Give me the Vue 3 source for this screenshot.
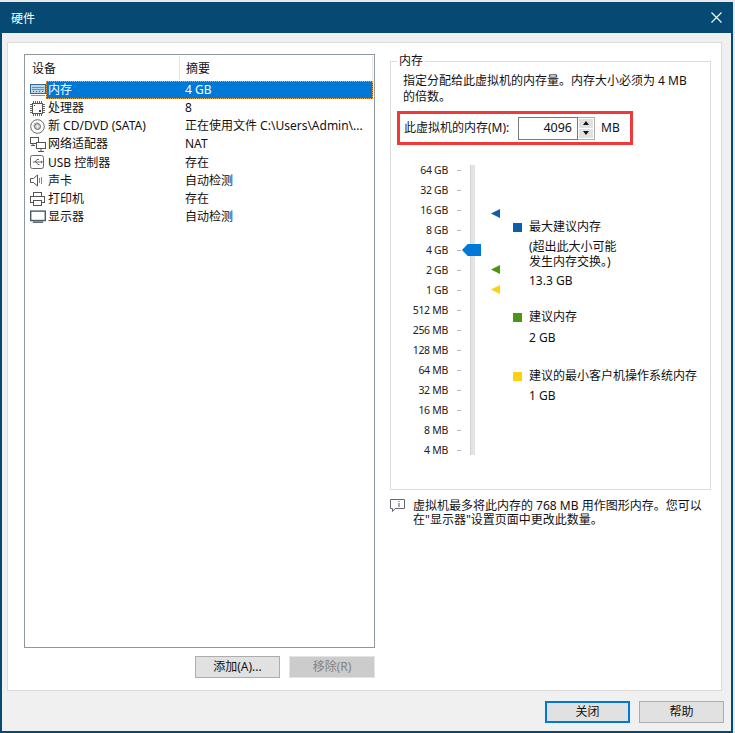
<script setup>
const devices = [
  { icon: 'mem', name: '内存', summary: '4 GB', selected: true },
  { icon: 'cpu', name: '处理器', summary: '8' },
  { icon: 'cd', name: '新 CD/DVD (SATA)', summary: '正在使用文件 C:\\Users\\Admin\\...' },
  { icon: 'net', name: '网络适配器', summary: 'NAT' },
  { icon: 'usb', name: 'USB 控制器', summary: '存在' },
  { icon: 'snd', name: '声卡', summary: '自动检测' },
  { icon: 'prn', name: '打印机', summary: '存在' },
  { icon: 'mon', name: '显示器', summary: '自动检测' }
]
const scale = ['64 GB','32 GB','16 GB','8 GB','4 GB','2 GB','1 GB','512 MB','256 MB','128 MB','64 MB','32 MB','16 MB','8 MB','4 MB']
</script>

<template>
  <div class="window">
    <div class="titlebar">
      <span class="title">硬件</span>
      <svg class="close" width="11" height="11" viewBox="0 0 11 11"><path d="M.5.5l10 10M10.500.5l-10 10" stroke="#fff" stroke-width="1.100" fill="none"/></svg>
    </div>
    <div class="body">
      <div class="panel">
        <div class="left">
          <div class="list">
            <div class="list-head">
              <div class="col1">设备</div>
              <div class="col2">摘要</div>
            </div>
            <div v-for="d in devices" :key="d.icon" class="row">
              <span class="ico">
                <svg v-if="d.icon==='mem'" width="16" height="12" viewBox="0 0 16 12"><rect x=".5" y=".5" width="15" height="9" fill="#bcd6ea" stroke="#2f6a96"/><path d="M2 3.500h12M2 5.500h12" stroke="#5f93bb"/><path d="M3 7.500h1M6 7.500h1M9 7.500h1M12 7.500h1" stroke="#2f6a96"/><path d="M1 11.500h14" stroke="#8a98a2"/></svg>
                <svg v-else-if="d.icon==='cpu'" width="15" height="15" viewBox="0 0 15 15"><rect x="2.500" y="2.500" width="10" height="10" fill="#fff" stroke="#555"/><path d="M3.500 0v2M5.500 0v2M7.500 0v2M9.500 0v2M11.500 0v2M3.500 13v2M5.500 13v2M7.500 13v2M9.500 13v2M11.500 13v2M0 3.500h2M0 5.500h2M0 7.500h2M0 9.500h2M0 11.500h2M13 3.500h2M13 5.500h2M13 7.500h2M13 9.500h2M13 11.500h2" stroke="#666"/><rect x="4" y="4" width="1" height="1" fill="#444"/><rect x="9" y="9" width="2" height="2" fill="#444"/></svg>
                <svg v-else-if="d.icon==='cd'" width="15" height="15" viewBox="0 0 15 15"><circle cx="7.500" cy="7.500" r="6.800" fill="#fff" stroke="#666"/><circle cx="7.500" cy="7.500" r="3" fill="#ccc" stroke="#666"/><circle cx="7.500" cy="7.500" r="1" fill="#fff"/><path d="M3.500 7.500a4 4 0 0 1 4-4" stroke="#aaa" fill="none"/></svg>
                <svg v-else-if="d.icon==='net'" width="16" height="15" viewBox="0 0 16 15"><rect x=".5" y=".5" width="8" height="6" fill="#fff" stroke="#555"/><rect x="6.500" y="5.500" width="9" height="6" fill="#fff" stroke="#555"/><path d="M11 12v2M8 14.500h6M1 8.500h4M3 7v2" stroke="#555" fill="none"/></svg>
                <svg v-else-if="d.icon==='usb'" width="15" height="15" viewBox="0 0 15 15"><rect x=".5" y=".5" width="13" height="13" rx="2" fill="#fff" stroke="#666"/><path d="M3 7h8M5 7l2-2.500h2M6 7l2 2.500h1.500" stroke="#666" fill="none"/><path d="M11 5.500v3l2-1.500z" fill="#666"/></svg>
                <svg v-else-if="d.icon==='snd'" width="14" height="13" viewBox="0 0 14 13"><path d="M.5 4.500h3l4-3.500v11l-4-3.500h-3z" fill="#fff" stroke="#555"/><path d="M9.500 4v5M11.500 3v7" stroke="#889" fill="none"/></svg>
                <svg v-else-if="d.icon==='prn'" width="15" height="14" viewBox="0 0 15 14"><rect x="3.500" y=".5" width="8" height="4" fill="#fff" stroke="#555"/><rect x=".5" y="4.500" width="14" height="6" fill="#fff" stroke="#555"/><rect x="3.500" y="8.500" width="8" height="5" fill="#fff" stroke="#555"/></svg>
                <svg v-else width="17" height="14" viewBox="0 0 17 14"><rect x=".75" y=".75" width="15.500" height="10" fill="#fff" stroke="#4a5a66" stroke-width="1.500"/><path d="M3 12.500h11" stroke="#4a5a66" stroke-width="1.500"/></svg>
              </span>
              <span class="cells" :class="{ sel: d.selected }">
                <span class="name">{{ d.name }}</span>
                <span class="summary">{{ d.summary }}</span>
              </span>
            </div>
          </div>
          <div class="list-actions">
            <button class="btn">添加(A)...</button>
            <button class="btn off">移除(R)</button>
          </div>
        </div>

        <div class="right">
          <fieldset class="group">
            <legend>内存</legend>
            <p class="desc">指定分配给此虚拟机的内存量。内存大小必须为 4 MB<br>的倍数。</p>
            <div class="mem-box">
              <span class="mem-label">此虚拟机的内存(M):</span>
              <div class="input">4096</div>
              <div class="spin">
                <span class="sb"><i class="up"></i></span>
                <span class="sb"><i class="down"></i></span>
              </div>
              <span class="unit">MB</span>
            </div>
            <div class="slider-area">
              <div class="slider">
                <div v-for="s in scale" :key="s" class="tick">
                  <span class="tick-label">{{ s }}</span><span class="dash"></span>
                </div>
                <div class="track"></div>
                <div class="thumb"></div>
                <div class="mark m1"></div>
                <div class="mark m2"></div>
                <div class="mark m3"></div>
              </div>
              <div class="legend">
                <div class="lg lg1">
                  <span class="sq blue"></span>
                  <div class="lg-text">
                    <div class="lg-name">最大建议内存</div>
                    <div class="lg-note">(超出此大小可能<br>发生内存交换。)</div>
                    <div class="lg-val">13.3 GB</div>
                  </div>
                </div>
                <div class="lg lg2">
                  <span class="sq green"></span>
                  <div class="lg-text">
                    <div class="lg-name">建议内存</div>
                    <div class="lg-val">2 GB</div>
                  </div>
                </div>
                <div class="lg lg3">
                  <span class="sq yellow"></span>
                  <div class="lg-text">
                    <div class="lg-name">建议的最小客户机操作系统内存</div>
                    <div class="lg-val">1 GB</div>
                  </div>
                </div>
              </div>
            </div>
          </fieldset>
          <div class="note">
            <svg class="note-ico" width="15" height="14" viewBox="0 0 15 14"><path d="M.5.5h14v9H5l-2.500 3v-3H.5z" fill="#fff" stroke="#667"/><path d="M9 2v1M9 4v4" stroke="#456" fill="none"/></svg>
            <p>虚拟机最多将此内存的 768 MB 用作图形内存。您可以<br>在"显示器"设置页面中更改此数量。</p>
          </div>
        </div>
      </div>
      <div class="footer">
        <button class="btn primary">关闭</button>
        <button class="btn">帮助</button>
      </div>
    </div>
  </div>
</template>

<style>
html, body { margin: 0; background: #e9e9e9; }
</style>

<style scoped>
* { box-sizing: border-box; }
.window {
  width: 733px; height: 731px; margin-top: 2px;
  border: 2px solid #064a74; border-top: 0;
  background: #f0f0f0;
  font: 12px/14px "Noto Sans", "Noto Sans CJK SC", sans-serif;
  color: #111;
  display: flex; flex-direction: column;
}
.titlebar {
  height: 31px; margin: 0 -2px; padding: 0 12px 0 11px;
  background: #064a74; color: #fff;
  display: flex; align-items: center; justify-content: space-between;
  font-size: 12px; flex: none;
}
.title { padding-top: 2px; }
.close { margin-right: -1px; }
.body { flex: 1; padding: 9px 9px 0 5px; display: flex; flex-direction: column; }
.panel {
  height: 649px; background: #fff; border: 1px solid #dcdcdc;
  display: flex; padding: 11px 10px 0 16px; flex: none;
}
.left { width: 351px; flex: none; }
.list { height: 594px; border: 1px solid #8d98a0; background: #fff; padding-top: 1px; }
.list-head { display: flex; height: 25px; line-height: 25px; }
.col1 { width: 155px; height: 24px; padding-left: 7px; border-right: 1px solid #e4e4e4; margin-right: 1px; }
.col2 { flex: 1; height: 24px; padding-left: 5px; border-right: 1px solid #e4e4e4; margin-right: 1px; }
.row { height: 18.140px; display: flex; align-items: center; padding-left: 5px; padding-right: 1px; }
.ico { width: 16px; height: 18px; display: flex; align-items: center; flex: none; }
.cells { flex: 1; height: 18px; line-height: 18px; display: flex; min-width: 0; }
.cells.sel {
  color: #fff; background: #0078d7;
  outline: 1px dotted #f0a040; outline-offset: -1px;
}
.name { width: 139px; flex: none; padding-left: 2px; white-space: nowrap; }
.summary { white-space: nowrap; }
.list-actions { display: flex; justify-content: flex-end; gap: 9px; margin-top: 8px; }
.btn {
  width: 85px; height: 22px; padding: 0;
  border: 1px solid #adadad; background: #e1e1e1;
  font: inherit; color: #111;
}
.btn.off { width: 86px; background: #cccccc; border-color: #e4e4e4; color: #838383; }
.btn.primary { border: 2px solid #0078d7; }
.right { width: 321px; margin-left: 15px; flex: none; }
.group {
  margin: 0; padding: 0 0 0 8px; height: 436px;
  border: 1px solid #dcdcdc; min-width: 0;
}
legend { padding: 0 2px; margin-left: -2px; line-height: 14px; }
.desc { margin: 5px 0 0 4px; line-height: 16px; white-space: nowrap; }
.mem-box {
  width: 236px; height: 34px; margin: 6px 0 0 -2px;
  border: 3px solid #ee3a3a;
  display: flex; align-items: center; padding-left: 4px;
}
.mem-label { width: 114px; flex: none; white-space: nowrap; }
.input {
  width: 60px; height: 23px; border: 1px solid #7a7a7a; background: #fff;
  text-align: right; padding-right: 5px; line-height: 19px; font-size: 12.500px;
}
.spin {
  width: 17px; height: 23px; border: 1px solid #adadad; border-left: 0;
  display: flex; flex-direction: column; gap: 1px; background: #fff; padding: 1px;
}
.sb { flex: 1; background: #e1e1e1; display: flex; align-items: center; justify-content: center; }
.up { border: 3px solid transparent; border-bottom: 4px solid #111; border-top: 0; }
.down { border: 3px solid transparent; border-top: 4px solid #111; border-bottom: 0; }
.unit { margin-left: 6px; }
.slider-area { display: flex; margin-top: 15px; }
.slider { position: relative; width: 113px; height: 300px; margin-left: -2px; flex: none; }
.tick { height: 20px; display: flex; align-items: center; justify-content: flex-end; padding-right: 49px; font-size: 10.500px; color: #222; }
.tick-label { white-space: nowrap; letter-spacing: -.3px; }
.dash { width: 4px; height: 1px; background: #b8b8b8; margin-left: 9px; }
.track { position: absolute; left: 73px; top: 5px; width: 5px; height: 290px; background: #e2e4e2; border-left: 1px solid #d2d4d2; }
.thumb {
  position: absolute; left: 65px; top: 84px; width: 19px; height: 12px; background: #0078d7;
  clip-path: polygon(0 50%, 30% 0, 100% 0, 100% 100%, 30% 100%);
}
.mark { position: absolute; left: 94px; width: 9px; height: 9px; clip-path: polygon(0 50%, 100% 0, 100% 100%); }
.m1 { top: 49px; background: #0a5fa8; }
.m2 { top: 105px; background: #4b9511; }
.m3 { top: 125px; background: #fcd20c; }
.legend { margin-left: 3px; min-width: 0; }
.lg { display: flex; }
.sq { width: 9px; height: 9px; margin-top: 3px; flex: none; margin-right: 7px; }
.blue { background: #0a5fa8; }
.green { background: #4b9511; }
.yellow { background: #fcd20c; }
.lg-text { white-space: nowrap; }
.lg1 { margin-top: 60px; }
.lg2 { margin-top: 22px; }
.lg3 { margin-top: 24px; }
.lg-note { margin-top: 6px; line-height: 14.500px; }
.lg-val { margin-top: 6px; }
.lg1 .lg-val { margin-top: 5px; }
.lg2 .lg-val { margin-top: 7px; }
.note { display: flex; margin-top: 9px; }
.note-ico { flex: none; margin-right: 8px; }
.note p { margin: 0; white-space: nowrap; line-height: 14px; }
.footer { display: flex; justify-content: flex-end; gap: 9px; padding: 10px 0 0; margin-right: -2px; }
</style>
